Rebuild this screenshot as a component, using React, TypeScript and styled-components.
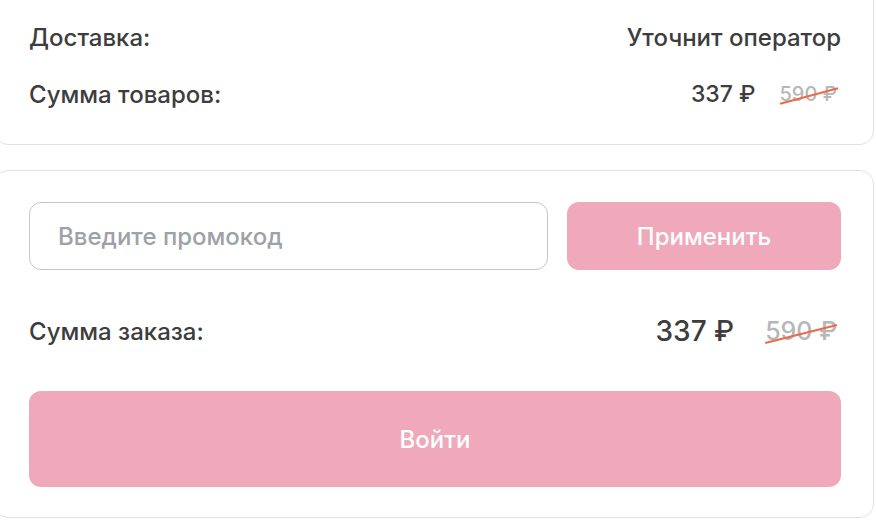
import React from "react";
import styled, { createGlobalStyle } from "styled-components";

const Global = createGlobalStyle`
  html, body { margin: 0; padding: 0; background: #ffffff; overflow: hidden; }
  body { font-family: Inter, "Noto Sans", sans-serif; color: #3d3d3d; }
  * { box-sizing: border-box; }
`;

const Page = styled.div`
  width: 880px;
  margin-left: -6px;
  display: flex;
  flex-direction: column;
  gap: 25px;
`;

const Card = styled.section<{ $top?: number }>`
  border: 1px solid #e2e2e2;
  border-radius: 14px;
  background: #fff;
  margin-top: ${(p) => p.$top ?? 0}px;
  padding: 0 32px 0 34px;
  display: flex;
  flex-direction: column;
`;

const SummaryCard = styled(Card)`
  padding-top: 40px;
  padding-bottom: 38px;
  gap: 33px;
`;

const OrderCard = styled(Card)`
  padding-top: 31px;
  padding-bottom: 30px;
`;

const Row = styled.div`
  display: flex;
  align-items: center;
  justify-content: space-between;
  height: 24px;
`;

const Label = styled.span`
  font-size: 24px;
  font-weight: 500;
  color: #3d3d3d;
`;

const Value = styled.span`
  font-size: 24px;
  font-weight: 500;
  color: #3d3d3d;
`;

const Prices = styled.div<{ $gap: number }>`
  display: flex;
  align-items: center;
  gap: ${(p) => p.$gap}px;
  margin-right: 4px;
`;

const Price = styled.span<{ $size: number }>`
  font-size: ${(p) => p.$size}px;
  font-weight: 500;
  color: #3d3d3d;
`;

const OldPrice = styled.span<{ $size: number; $angle: number }>`
  position: relative;
  font-size: ${(p) => p.$size}px;
  font-weight: 500;
  color: #b7b7b7;
  &::after {
    content: "";
    position: absolute;
    left: -1px;
    right: -1px;
    top: 55%;
    height: 1.5px;
    background: #ec6a4b;
    transform: rotate(${(p) => p.$angle}deg);
  }
`;

const PromoRow = styled.div`
  display: flex;
  gap: 19px;
  height: 68px;
`;

const PromoInput = styled.input`
  flex: 1;
  height: 100%;
  border: 1px solid #c6c6c6;
  border-radius: 12px;
  padding: 0 28px;
  font-family: inherit;
  font-size: 24px;
  font-weight: 500;
  color: #3d3d3d;
  outline: none;
  &::placeholder { color: #9ea1a8; }
`;

const PinkButton = styled.button<{ $width?: number; $height: number }>`
  width: ${(p) => (p.$width ? `${p.$width}px` : "100%")};
  height: ${(p) => p.$height}px;
  border: none;
  border-radius: 12px;
  background: #f0a8bb;
  color: #ffffff;
  font-family: inherit;
  font-size: 24px;
  font-weight: 500;
  cursor: pointer;
`;

const TotalRow = styled(Row)`
  height: 34px;
  margin: 44px 0 43px;
`;

export default function App() {
  return (
    <>
      <Global />
      <Page>
        <SummaryCard $top={-16}>
          <Row>
            <Label>Доставка:</Label>
            <Value>Уточнит оператор</Value>
          </Row>
          <Row>
            <Label>Сумма товаров:</Label>
            <Prices $gap={24}>
              <Price $size={23}>337 ₽</Price>
              <OldPrice $size={20} $angle={-15}>590 ₽</OldPrice>
            </Prices>
          </Row>
        </SummaryCard>
        <OrderCard>
          <PromoRow>
            <PromoInput placeholder="Введите промокод" />
            <PinkButton $width={274} $height={68}>Применить</PinkButton>
          </PromoRow>
          <TotalRow>
            <Label>Сумма заказа:</Label>
            <Prices $gap={31}>
              <Price $size={28}>337 ₽</Price>
              <OldPrice $size={25} $angle={-14}>590 ₽</OldPrice>
            </Prices>
          </TotalRow>
          <PinkButton $height={96}>Войти</PinkButton>
        </OrderCard>
      </Page>
    </>
  );
}
